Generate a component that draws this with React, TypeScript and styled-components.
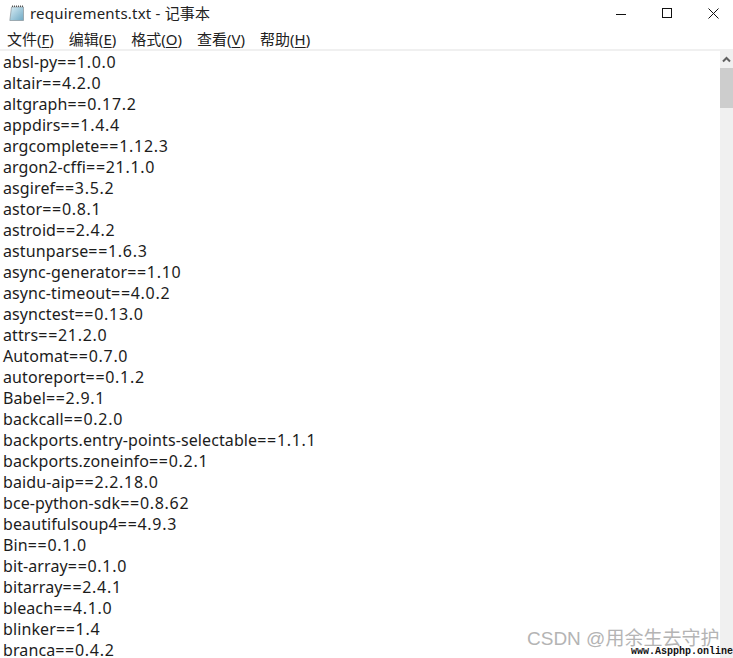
import React from "react";
import styled, { createGlobalStyle } from "styled-components";

const Global = createGlobalStyle`
  html, body { margin: 0; padding: 0; background: #fff; }
  body { width: 733px; height: 658px; overflow: hidden; }
`;

const Window = styled.div`
  position: relative;
  width: 733px;
  height: 658px;
  overflow: hidden;
  display: flex;
  flex-direction: column;
  background: #fff;
  color: #1a1a1a;
  font-family: "Noto Sans", "Noto Sans CJK SC", sans-serif;
`;

const TitleBar = styled.div`
  height: 26px;
  display: flex;
  align-items: center;
  padding-left: 9px;
  flex: none;
`;

const FileIcon = styled.svg`
  width: 16px;
  height: 17px;
  flex: none;
`;

const TitleText = styled.span`
  margin-left: 5px;
  font-size: 15px;
  line-height: 26px;
  letter-spacing: 0.2px;
  color: #222;
`;

const WindowButtons = styled.div`
  margin-left: auto;
  margin-right: -3px;
  display: flex;
`;

const WindowButton = styled.div`
  width: 46px;
  height: 26px;
  display: flex;
  align-items: center;
  justify-content: center;
`;

const MenuBar = styled.div`
  box-sizing: border-box;
  height: 23px;
  padding: 3px 0 0 7px;
  display: flex;
  align-items: center;
  gap: 15px;
  flex: none;
  font-size: 15px;
  color: #222;
`;

const MenuItem = styled.span`
  line-height: 20px;
  u { text-underline-offset: 2px; }
`;

const Body = styled.div`
  flex: 1;
  min-height: 0;
  display: flex;
  border-top: 2px solid #f0f0f0;
`;

const Content = styled.div`
  flex: 1;
  min-width: 0;
  overflow: hidden;
  padding: 1px 0 0 3px;
`;

const Line = styled.div`
  height: 21px;
  line-height: 21px;
  font-size: 16px;
  letter-spacing: 0.1px;
  white-space: nowrap;
  color: #1c1c1c;
`;

const Version = styled.span`
  letter-spacing: 0.7px;
`;

const Scrollbar = styled.div`
  width: 13px;
  flex: none;
  background: #f0f0f0;
  display: flex;
  flex-direction: column;
`;

const ScrollArrow = styled.div`
  height: 17px;
  display: flex;
  align-items: center;
  justify-content: center;
`;

const ScrollThumb = styled.div`
  height: 40px;
  background: #cdcdcd;
`;

const Watermark = styled.div`
  position: absolute;
  left: 527px;
  top: 627px;
  font-size: 19px;
  line-height: 24px;
  color: #b4b4b4;
  white-space: nowrap;
  font-family: "Liberation Sans", "Noto Sans CJK SC", sans-serif;
`;

const SiteMark = styled.div`
  position: absolute;
  left: 631px;
  top: 645px;
  font-size: 10px;
  line-height: 13px;
  font-weight: 700;
  color: #111;
  white-space: nowrap;
  font-family: "Liberation Mono", monospace;
`;

const lines = [
  "absl-py==1.0.0", "altair==4.2.0", "altgraph==0.17.2", "appdirs==1.4.4",
  "argcomplete==1.12.3", "argon2-cffi==21.1.0", "asgiref==3.5.2", "astor==0.8.1",
  "astroid==2.4.2", "astunparse==1.6.3", "async-generator==1.10", "async-timeout==4.0.2",
  "asynctest==0.13.0", "attrs==21.2.0", "Automat==0.7.0", "autoreport==0.1.2",
  "Babel==2.9.1", "backcall==0.2.0", "backports.entry-points-selectable==1.1.1",
  "backports.zoneinfo==0.2.1", "baidu-aip==2.2.18.0", "bce-python-sdk==0.8.62",
  "beautifulsoup4==4.9.3", "Bin==0.1.0", "bit-array==0.1.0", "bitarray==2.4.1",
  "bleach==4.1.0", "blinker==1.4", "branca==0.4.2",
];

const menus: [string, string][] = [
  ["文件", "F"], ["编辑", "E"], ["格式", "O"], ["查看", "V"], ["帮助", "H"],
];

export default function App() {
  return (
    <Window>
      <Global />
      <TitleBar>
        <FileIcon viewBox="0 0 16 17">
          <defs>
            <linearGradient id="pad" x1="0" y1="0" x2="1" y2="1">
              <stop offset="0" stopColor="#d8edf5" />
              <stop offset="1" stopColor="#6fa9c4" />
            </linearGradient>
          </defs>
          <path d="M2.5 2h12v13.5H0.8z" fill="url(#pad)" stroke="#8a949a" strokeWidth="0.7" />
          <path d="M3 1.2h11.5" stroke="#555" strokeWidth="1.6" strokeDasharray="1 1" />
        </FileIcon>
        <TitleText>requirements.txt - 记事本</TitleText>
        <WindowButtons>
          <WindowButton>
            <svg width="10" height="10" viewBox="0 0 10 10">
              <path d="M0 6.5h10" stroke="#111" strokeWidth="1" />
            </svg>
          </WindowButton>
          <WindowButton>
            <svg width="10" height="10" viewBox="0 0 10 10">
              <rect x="0.5" y="0.5" width="9" height="9" fill="none" stroke="#111" strokeWidth="1" />
            </svg>
          </WindowButton>
          <WindowButton>
            <svg width="11" height="11" viewBox="0 0 11 11">
              <path d="M0.5 0.5l10 10M10.5 0.5l-10 10" stroke="#111" strokeWidth="1" />
            </svg>
          </WindowButton>
        </WindowButtons>
      </TitleBar>
      <MenuBar>
        {menus.map(([label, key]) => (
          <MenuItem key={key}>
            {label}(<u>{key}</u>)
          </MenuItem>
        ))}
      </MenuBar>
      <Body>
        <Content>
          {lines.map((l) => {
            const at = l.indexOf("==");
            return (
              <Line key={l}>
                {l.slice(0, at)}
                <Version>{l.slice(at)}</Version>
              </Line>
            );
          })}
        </Content>
        <Scrollbar>
          <ScrollArrow>
            <svg width="9" height="7" viewBox="0 0 9 7">
              <path d="M1 5.5l3.5-3.5 3.5 3.5" fill="none" stroke="#606060" strokeWidth="2" />
            </svg>
          </ScrollArrow>
          <ScrollThumb />
        </Scrollbar>
      </Body>
      <Watermark>CSDN @用余生去守护</Watermark>
      <SiteMark>www.Aspphp.online</SiteMark>
    </Window>
  );
}
